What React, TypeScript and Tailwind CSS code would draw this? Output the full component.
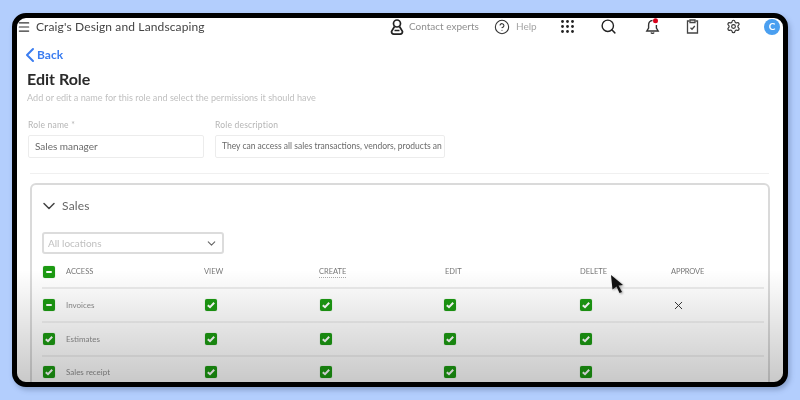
import { ChevronDown, ChevronLeft, HelpCircle, Menu, Search, Settings, X } from "lucide-react";

const font = { fontFamily: "Lato, 'Open Sans', sans-serif" };

function GreenBox({ minus }: { minus?: boolean }) {
  return (
    <span className="flex h-3 w-3 items-center justify-center rounded-[2px] bg-[#1c9a12] shadow-[0_0_1px_#7ab878]">
      {minus ? (
        <span className="h-[2px] w-[6px] rounded-sm bg-white" />
      ) : (
        <svg viewBox="0 0 12 12" className="h-3 w-3" fill="none" stroke="white" strokeWidth="2">
          <path d="M2.8 6.2 5 8.2 9.2 3.8" />
        </svg>
      )}
    </span>
  );
}

// one row of the permission table
function Row({ name, minus, approve, height }: { name: string; minus?: boolean; approve?: boolean; height: string }) {
  return (
    <div className={`flex items-center border-b-2 border-[#f0f0f0] last:border-b-0 ${height}`}>
      <div className="w-[24px] pl-px">
        <GreenBox minus={minus} />
      </div>
      <div className="w-[138px] text-[8px] text-[#8d8d8d]">{name}</div>
      <div className="w-[115px] pl-px"><GreenBox /></div>
      <div className="w-[125px] pl-px"><GreenBox /></div>
      <div className="w-[136px]"><GreenBox /></div>
      <div className="w-[92px]"><GreenBox /></div>
      {approve && <X className="h-[13px] w-[13px] text-[#333]" strokeWidth={1.8} />}
    </div>
  );
}

export default function App() {
  return (
    <div className="h-[400px] w-[800px] overflow-hidden bg-[#b3cefd] pl-[12px] pt-[13px]" style={font}>
      <div className="relative h-[374px] w-[776px] overflow-hidden rounded-[14px] border-[5px] border-black bg-white shadow-[2px_3px_5px_rgba(60,80,120,0.35)]">
        <div className="blur-[0.4px]">
          {/* top bar */}
          <div className="flex h-[17px] items-center">
            <Menu className="h-[14px] w-[14px] text-[#333]" strokeWidth={2} />
            <span className="ml-[5px] w-[354px] whitespace-nowrap text-[12px] tracking-[0.13px] text-[#444]">Craig's Design and Landscaping</span>
            <svg viewBox="0 0 14 16" className="h-[16px] w-[14px]" fill="none" stroke="#222" strokeWidth="1.7">
              <circle cx="7" cy="4.5" r="3.5" />
              <path d="M4.500 7.500 1.500 12.500c0 1.800 1 2.600 2.300 2.600h6.400c1.300 0 2.300-.8 2.300-2.600L9.500 7.500M4.500 11.500h5" />
            </svg>
            <span className="ml-[5px] w-[85px] whitespace-nowrap text-[10px] text-[#8f8f8f]">Contact experts</span>
            <HelpCircle className="h-4 w-4 text-[#333]" strokeWidth={1.6} />
            <span className="ml-[6px] w-[45px] text-[10px] text-[#a5a5a5]">Help</span>
            <svg viewBox="0 0 13 13" className="h-[13px] w-[13px]" fill="#222">
              {[1.5, 6.5, 11.500].map((y) =>
                [1.5, 6.5, 11.500].map((x) => <circle key={`${x}-${y}`} cx={x} cy={y} r="1.4" />),
              )}
            </svg>
            <Search className="ml-[26px] h-[17px] w-[17px] text-[#222]" strokeWidth={2} />
            <svg viewBox="0 0 15 17" className="ml-[28px] h-[17px] w-[15px]" fill="none" stroke="#333" strokeWidth="1.4">
              <path d="M7.500 2.500C4.800 2.500 3.600 4.500 3.600 7v3L1.800 13h11.400L11.400 10V7M6 14.500c.4 1.200 2.600 1.200 3 0" />
              <circle cx="10.500" cy="2.800" r="2.500" fill="#d9001b" stroke="none" />
            </svg>
            <svg viewBox="0 0 13 15" className="ml-[26px] h-[15px] w-[13px]" fill="none" stroke="#444" strokeWidth="1.3">
              <path d="M3.500 2H1.500v12h10V2H9.500" />
              <path d="M4 1h5v2.500H4z" />
              <path d="M4.500 8.800 6 10.200 8.800 7" />
            </svg>
            <Settings className="ml-[27px] h-[15px] w-[15px] text-[#333]" strokeWidth={1.8} />
            <span className="ml-[23px] flex h-[16px] w-[16px] items-center justify-center rounded-full bg-[#4a9ff0] text-[10px] font-bold text-white">C</span>
          </div>

          {/* heading */}
          <div className="pl-[10px]">
            <div className="mt-[11px] flex h-[18px] items-center text-[12px] font-bold text-[#3b7df0]">
              <ChevronLeft className="-ml-[9px] -mr-[5px] h-6 w-6" strokeWidth={2} />
              <span>Back</span>
            </div>
            <h1 className="mt-[5px] text-[16px] font-bold leading-[20px] text-[#2a2a2a]">Edit Role</h1>
            <p className="mt-[3px] whitespace-nowrap text-[9.1px] leading-[12px] text-[#c0c0c0]">Add or edit a name for this role and select the permissions it should have</p>

            {/* role fields */}
            <div className="ml-px mt-[16px] flex gap-[11px]">
              <div className="w-[176px]">
                <div className="text-[8.5px] leading-[11px] tracking-[0.2px] text-[#b5b5b5]">Role name *</div>
                <div className="mt-[4px] flex h-[23px] items-center rounded-[2px] border border-[#ececec] pl-[6px] text-[10px] text-[#6a6a6a]">Sales manager</div>
              </div>
              <div className="w-[230px]">
                <div className="text-[8.5px] leading-[11px] tracking-[0.2px] text-[#b5b5b5]">Role description</div>
                <div className="mt-[4px] flex h-[23px] items-center overflow-hidden whitespace-nowrap rounded-[2px] border border-[#ececec] pl-[6px] text-[8.5px] text-[#6a6a6a]">They can access all sales transactions, vendors, products an</div>
              </div>
            </div>
            <div className="ml-[3px] mt-[15px] h-px w-[739px] bg-[#f0f0f0]" />
          </div>

          {/* sales card */}
          <div className="ml-[13px] mt-[9px] h-[220px] w-[740px] rounded-[6px] border-2 border-[#dadada] pl-[10px] pr-[4px]">
            <div className="flex h-[40px] items-center pl-[2px] pt-[2px]">
              <ChevronDown className="-ml-[5px] h-5 w-5 text-[#444]" strokeWidth={1.8} />
              <span className="ml-[3px] text-[12px] tracking-[0.2px] text-[#666]">Sales</span>
            </div>
            <div className="mt-[7px] flex h-[22px] w-[182px] items-center justify-between rounded-[3px] border-2 border-[#dcdcdc] pl-[4px] pr-[4px] text-[10px] text-[#c0c0c0]">
              All locations
              <ChevronDown className="h-[13px] w-[13px] text-[#666]" strokeWidth={2} />
            </div>
            <div className="mt-[3px] flex h-[32px] items-center border-b-2 border-[#ececec] pb-[1px] text-[7.5px] text-[#777]">
              <div className="w-[24px] pl-px"><GreenBox minus /></div>
              <div className="w-[138px]">ACCESS</div>
              <div className="w-[115px]">VIEW</div>
              <div className="w-[126px]"><span className="border-b border-dotted border-[#aaa] pb-px">CREATE</span></div>
              <div className="w-[135px]">EDIT</div>
              <div className="w-[91px]">DELETE</div>
              <div className="tracking-[-0.1px]">APPROVE</div>
            </div>
            <Row name="Invoices" minus approve height="h-[34px]" />
            <Row name="Estimates" height="h-[34px]" />
            <Row name="Sales receipt" height="h-[30px]" />
          </div>
        </div>

        {/* video fade over the lower part */}
        <div className="pointer-events-none absolute inset-x-0 bottom-0 h-[112px] bg-gradient-to-b from-transparent to-[#00000036]" />

        {/* mouse pointer */}
        <svg viewBox="0 0 16 20" className="absolute left-[593px] top-[256px] h-[20px] w-[16px] drop-shadow-[1px_1px_1px_rgba(0,0,0,0.4)]" fill="#111">
          <path d="M1 1 13 11 8.500 11.500 12 18 9.500 19 6.500 12.500 2.500 15.500Z" />
        </svg>
      </div>
    </div>
  );
}
